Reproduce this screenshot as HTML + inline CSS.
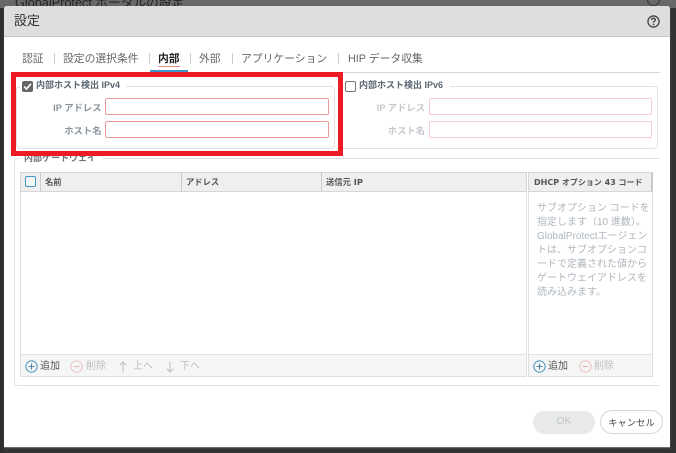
<!DOCTYPE html>
<html lang="ja"><head><meta charset="utf-8">
<style>
html,body{margin:0;padding:0}
body{width:676px;height:453px;overflow:hidden;position:relative;background:#333;font-family:"Liberation Sans","Noto Sans CJK JP",sans-serif;color:#555}
div,span,svg{position:absolute;box-sizing:border-box;white-space:nowrap}
.t{font-size:11px;line-height:14px}
.tab{font-size:10.8px;line-height:16px;top:51px;color:#666}
.sep{top:53px;width:1px;height:11px;background:#ccc}
.inp{height:17px;border-radius:2px;background:#fff}
.leg{font-size:9px;font-weight:bold;color:#5a6570;top:78px}
.lab{width:72px;text-align:right;font-size:9.3px;font-weight:bold}
.th{top:172px;height:20px;background:#eef0f0;border-top:1px solid #d5d7d7;border-bottom:1px solid #d5d7d7;font-family:"DejaVu Sans","Noto Sans CJK JP",sans-serif;font-size:8.3px;font-weight:bold;line-height:19px;color:#555}
</style></head><body>
<div style="left:0;top:0;width:676px;height:8px;background:#686868"></div>
<div style="left:0;top:8px;width:4px;height:445px;background:#2e2e2e"></div>
<div style="left:15px;top:-5px;font-size:12.7px;line-height:16px;color:#222">GlobalProtect ポータルの設定</div>
<div style="left:647px;top:-7px;width:13px;height:13px;border:1.5px solid #333;border-radius:50%"></div>
<div style="left:4px;top:6px;width:666px;height:441px;background:#fff;border-radius:3px 3px 0 0;box-shadow:0 1px 1px #777"></div>
<div style="left:4px;top:6px;width:666px;height:31px;background:#dddedf;border-bottom:1px solid #c4c5c6;border-radius:3px 3px 0 0"></div>
<div style="left:14px;top:12px;font-size:13px;line-height:17px;color:#333">設定</div>
<svg style="left:647px;top:15px" width="13" height="13" viewBox="0 0 14 14"><circle cx="7" cy="7" r="6" fill="none" stroke="#444" stroke-width="1.4"/><path d="M5 5.4C5 4.2 5.9 3.6 7 3.6S9 4.3 9 5.3C9 6.6 7 6.6 7 8.2" fill="none" stroke="#444" stroke-width="1.5"/><rect x="6.2" y="9.3" width="1.6" height="1.6" fill="#444"/></svg>

<div class="tab" style="left:22px">認証</div><div class="sep" style="left:54px"></div>
<div class="tab" style="left:63px">設定の選択条件</div><div class="sep" style="left:149px"></div>
<div class="tab" style="left:158px;color:#222;font-weight:bold">内部</div><div style="left:158px;top:66px;width:22px;height:1px;background:#e58a8a"></div>
<div class="sep" style="left:190px"></div>
<div class="tab" style="left:199px">外部</div><div class="sep" style="left:232px"></div>
<div class="tab" style="left:241px">アプリケーション</div><div class="sep" style="left:338px"></div>
<div class="tab" style="left:348px">HIP データ収集</div>
<div style="left:14px;top:72px;width:646px;height:1px;background:#d8d8d8"></div>
<div style="left:150px;top:70px;width:38px;height:2px;background:#3b95c9"></div>

<!-- IPv4 -->
<div style="left:16px;top:86px;width:319px;height:63px;border:1px solid #e2e2e2;border-radius:4px"></div>
<div style="left:20px;top:78px;width:106px;height:14px;background:#fff"></div>
<div style="left:22px;top:81px;width:11px;height:11px;background:#666;border-radius:2px"></div>
<svg style="left:22px;top:81px" width="11" height="11" viewBox="0 0 11 11"><path d="M2.2 5.6 4.5 8 8.9 2.8" fill="none" stroke="#fff" stroke-width="1.6"/></svg>
<div class="t leg" style="left:36px">内部ホスト検出 IPv4</div>
<div class="t lab" style="left:29.5px;top:101px;color:#8b949c">IP アドレス</div>
<div class="inp" style="left:105px;top:98px;width:224px;border:1px solid #e89a9a"></div>
<div class="t lab" style="left:29.5px;top:124px;color:#8b949c">ホスト名</div>
<div class="inp" style="left:105px;top:121px;width:224px;border:1px solid #e89a9a"></div>

<!-- IPv6 -->
<div style="left:341px;top:86px;width:317px;height:63px;border:1px solid #e2e2e2;border-radius:4px"></div>
<div style="left:344px;top:78px;width:106px;height:14px;background:#fff"></div>
<div style="left:345px;top:81px;width:11px;height:11px;background:#fff;border:1px solid #777;border-radius:2px"></div>
<div class="t leg" style="left:359px">内部ホスト検出 IPv6</div>
<div class="t lab" style="left:353px;top:101px;color:#c4c8cc">IP アドレス</div>
<div class="inp" style="left:429px;top:98px;width:223px;border:1px solid #f5cfcf"></div>
<div class="t lab" style="left:353px;top:124px;color:#c4c8cc">ホスト名</div>
<div class="inp" style="left:429px;top:121px;width:223px;border:1px solid #f5cfcf"></div>

<!-- Gateway group -->
<div style="left:14px;top:158px;width:646px;height:228px;border:1px solid #e2e2e2;border-right:0;border-radius:4px 0 0 4px"></div>
<div style="left:20px;top:152px;width:82px;height:12px;background:#fff"></div>
<div class="t" style="left:24px;top:151px;font-size:9px;font-weight:bold;color:#6a7278">内部ゲートウェイ</div>

<!-- red highlight -->
<div style="left:11px;top:72px;width:332px;height:84px;border:5px solid #ed1c24"></div>

<!-- main table -->
<div style="left:20px;top:172px;width:507px;height:205px;border:1px solid #dfe1e1"></div>
<div class="th" style="left:20px;width:21px;border-left:1px solid #d5d7d7;border-right:1px solid #ccc"></div>
<div style="left:25px;top:176px;width:11px;height:11px;border:1.5px solid #3f97c6;border-radius:2px;background:#f5f7f7"></div>
<div class="th" style="left:41px;width:141px;padding-left:4px;border-right:1px solid #c8caca">名前</div>
<div class="th" style="left:182px;width:140px;padding-left:4px;border-right:1px solid #c8caca">アドレス</div>
<div class="th" style="left:322px;width:205px;padding-left:4px;border-right:1px solid #d5d7d7">送信元 IP</div>
<div style="left:21px;top:354px;width:505px;height:22px;background:#f5f7f7;border-top:1px solid #dfe3e3"></div>

<!-- DHCP panel -->
<div style="left:528px;top:172px;width:125px;height:205px;border:1px solid #dfe1e1"></div>
<div class="th" style="left:528px;width:125px;padding-left:5px;font-size:8px;border-left:1px solid #d5d7d7;border-right:2px solid #c8caca">DHCP オプション 43 コード</div>
<div style="left:537px;top:202px;width:108px;font-size:10px;line-height:14px;color:#aeb6bc">サブオプション コードを<br>指定します（10 進数）。<br>GlobalProtectエージェン<br>トは、サブオプションコ<br>ードで定義された値から<br>ゲートウェイアドレスを<br>読み込みます。</div>
<div style="left:529px;top:354px;width:123px;height:22px;background:#f5f7f7;border-top:1px solid #dfe3e3"></div>

<!-- toolbar -->
<svg style="left:25px;top:360px" width="13" height="13" viewBox="0 0 13 13"><circle cx="6.5" cy="6.5" r="5.7" fill="none" stroke="#5b9cc0" stroke-width="1.1"/><path d="M3.5 6.5h6M6.5 3.5v6" stroke="#4d86a8" stroke-width="1.1"/></svg>
<div class="t" style="left:40px;top:360px;font-size:10px;color:#555">追加</div>
<svg style="left:70px;top:360px" width="13" height="13" viewBox="0 0 13 13"><circle cx="6.5" cy="6.5" r="5.7" fill="none" stroke="#efc5c5" stroke-width="1.1"/><path d="M3.5 6.5h6" stroke="#e8b5b5" stroke-width="1.1"/></svg>
<div class="t" style="left:86px;top:360px;font-size:10px;color:#bcbcbc">削除</div>
<svg style="left:118px;top:361px" width="10" height="12" viewBox="0 0 10 12"><path d="M5 11.5V1M1.8 4.2 5 1l3.2 3.2" fill="none" stroke="#bbb" stroke-width="1"/></svg>
<div class="t" style="left:133px;top:360px;font-size:10px;color:#bcbcbc">上へ</div>
<svg style="left:165px;top:361px" width="10" height="12" viewBox="0 0 10 12"><path d="M5 .5V11M1.8 7.8 5 11l3.2-3.2" fill="none" stroke="#bbb" stroke-width="1"/></svg>
<div class="t" style="left:180px;top:360px;font-size:10px;color:#bcbcbc">下へ</div>
<svg style="left:533px;top:360px" width="13" height="13" viewBox="0 0 13 13"><circle cx="6.5" cy="6.5" r="5.7" fill="none" stroke="#5b9cc0" stroke-width="1.1"/><path d="M3.5 6.5h6M6.5 3.5v6" stroke="#4d86a8" stroke-width="1.1"/></svg>
<div class="t" style="left:548px;top:360px;font-size:10px;color:#555">追加</div>
<svg style="left:579px;top:360px" width="13" height="13" viewBox="0 0 13 13"><circle cx="6.5" cy="6.5" r="5.7" fill="none" stroke="#efc5c5" stroke-width="1.1"/><path d="M3.5 6.5h6" stroke="#e8b5b5" stroke-width="1.1"/></svg>
<div class="t" style="left:594px;top:360px;font-size:10px;color:#bcbcbc">削除</div>

<!-- buttons -->
<div style="left:533px;top:411px;width:62px;height:23px;background:#e8e9ea;border-radius:12px;text-align:center;font-size:10px;line-height:22px;color:#c3c6c8">OK</div>
<div style="left:600px;top:410px;width:63px;height:24px;background:#fff;border:1px solid #d5d6d7;border-radius:12px;text-align:center;font-size:9.3px;line-height:24px;color:#444">キャンセル</div>
</body></html>
